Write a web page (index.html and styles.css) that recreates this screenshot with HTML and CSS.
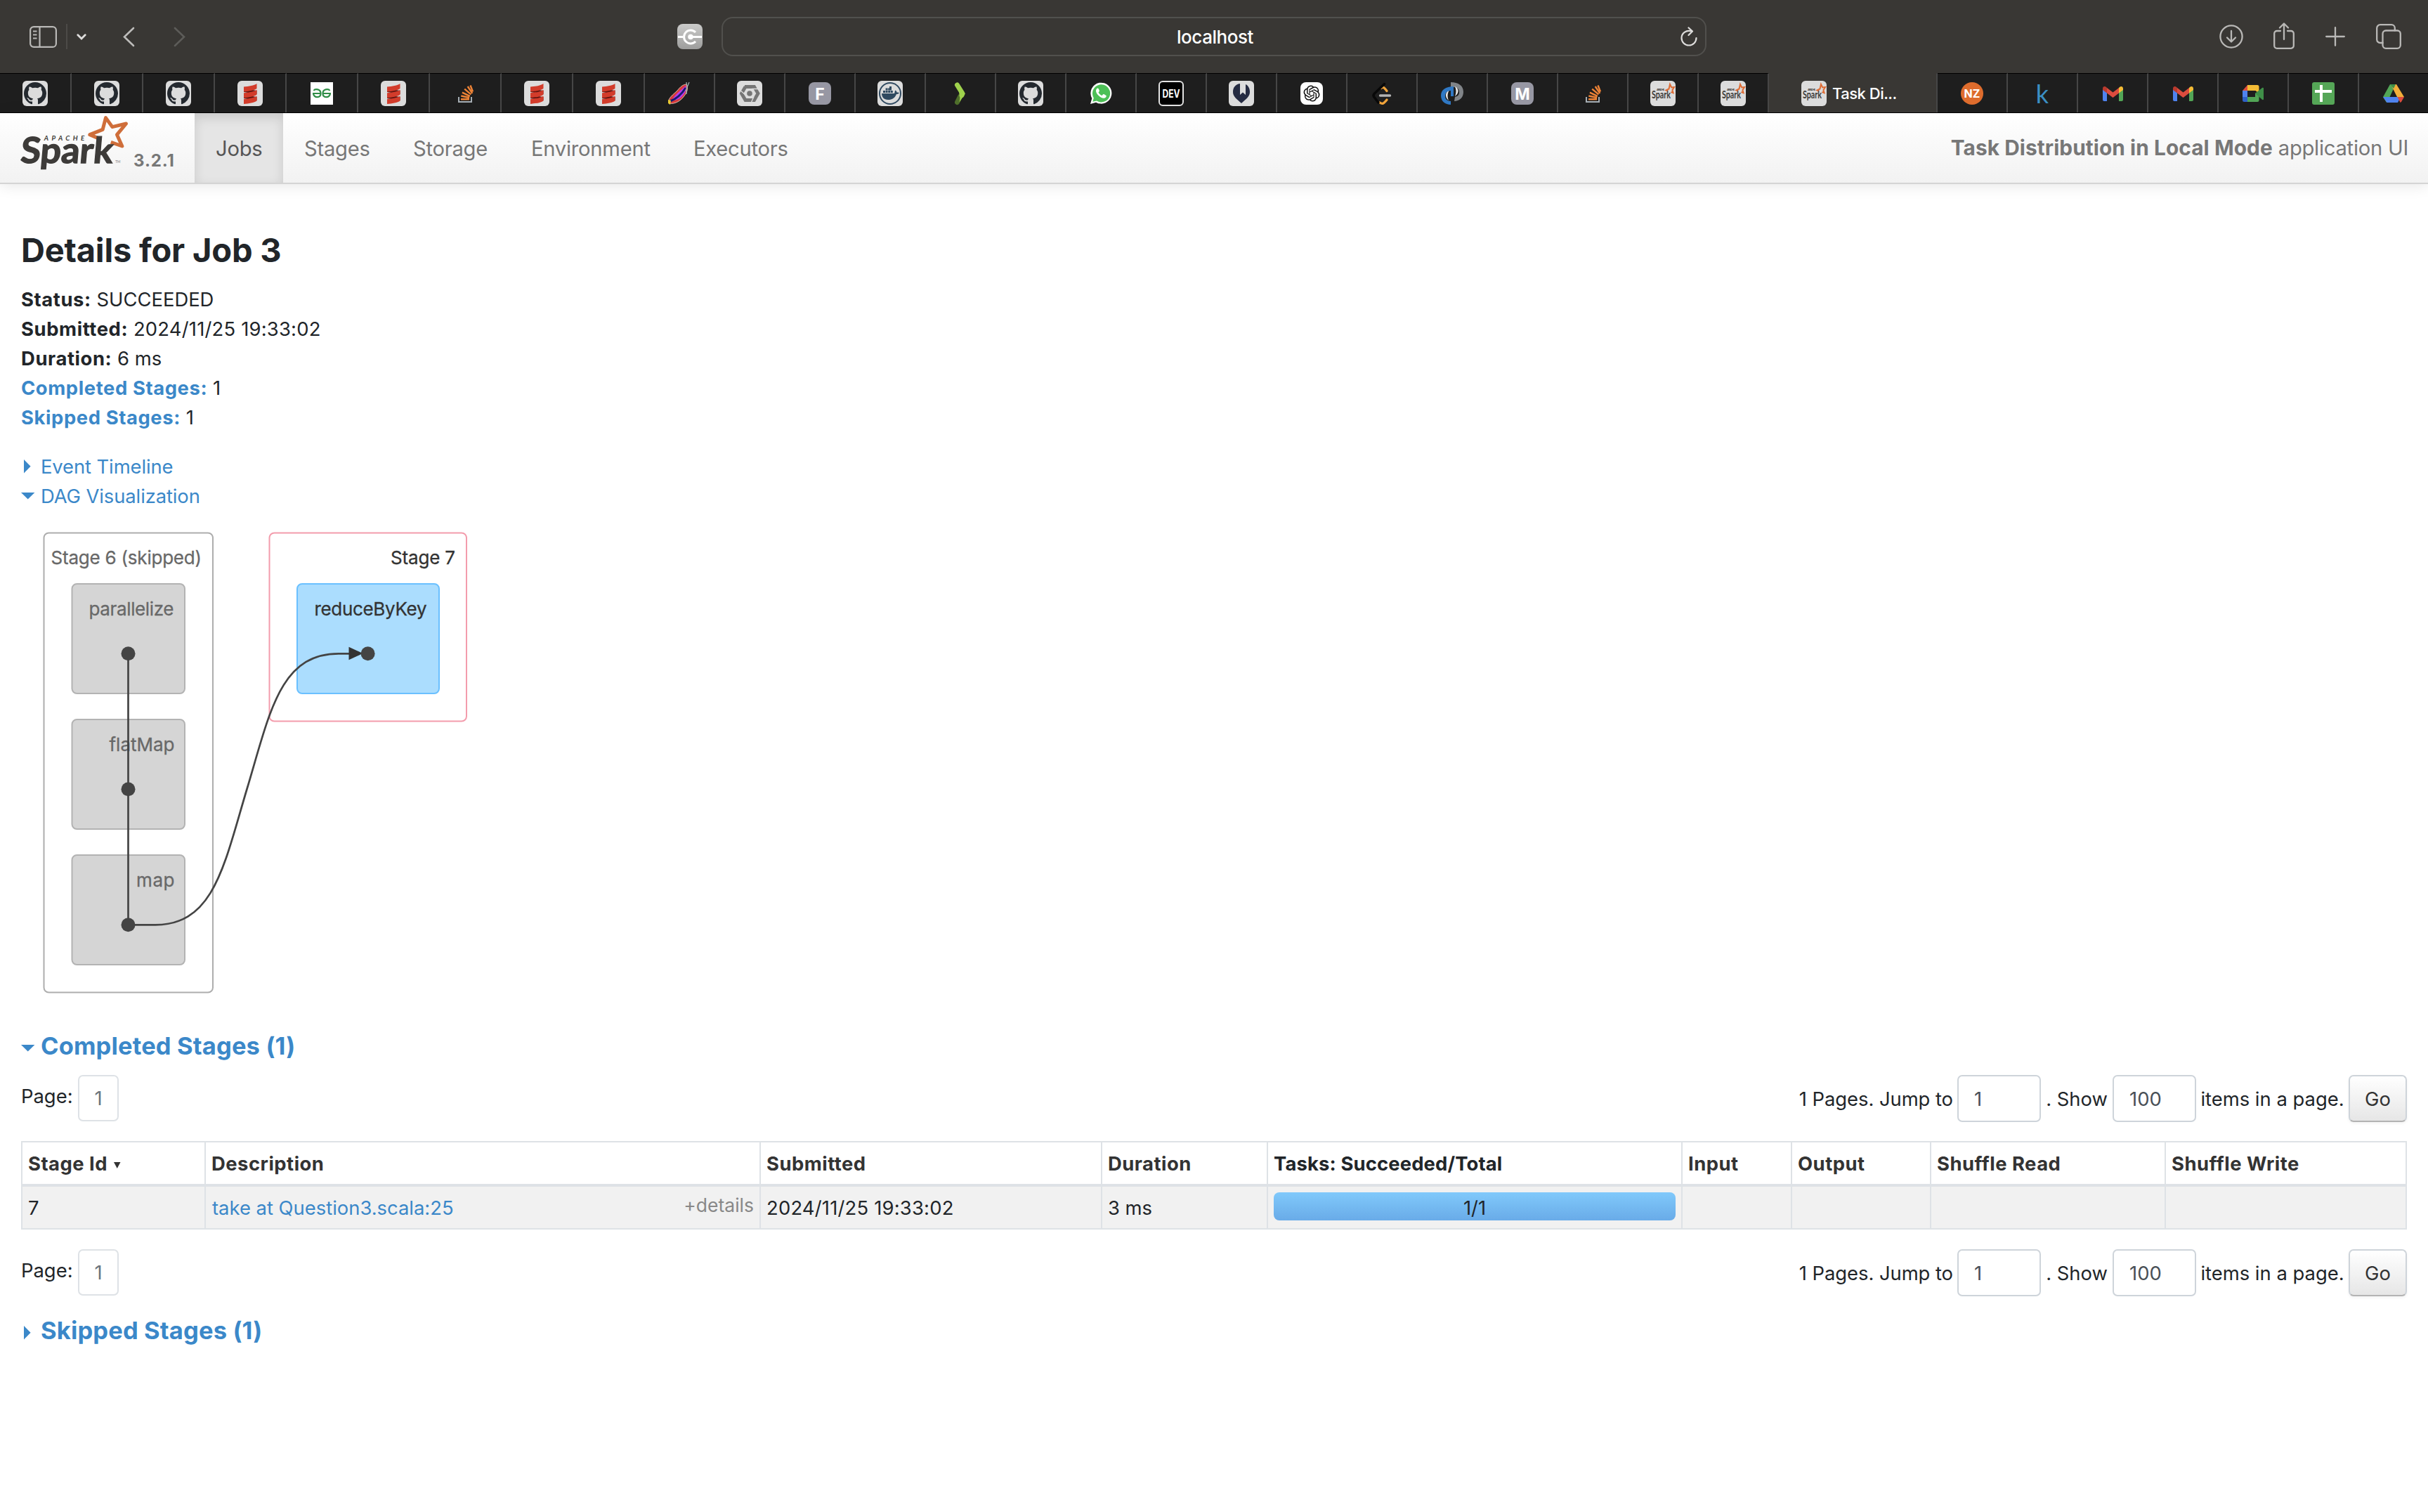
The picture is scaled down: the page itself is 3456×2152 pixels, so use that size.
FILE: index.html
```html
<!DOCTYPE html>
<html lang="en">
<head>
<meta charset="utf-8">
<title>Task Distribution in Local Mode - Details for Job 3</title>
<link rel="stylesheet" href="styles.css">
</head>
<body>
<svg class="sprite" aria-hidden="true">
  <symbol id="github" viewBox="0 0 36 36">
    <rect width="36" height="36" rx="6" fill="#dcdcdc"/>
    <path transform="translate(2 2)" fill="#24292f" fill-rule="evenodd" d="M16 0C7.16 0 0 7.16 0 16c0 7.08 4.58 13.06 10.94 15.18.8.14 1.1-.34 1.1-.76 0-.38-.02-1.64-.02-2.98-4.02.74-5.06-.98-5.38-1.88-.18-.46-.96-1.88-1.64-2.26-.56-.3-1.36-1.04-.02-1.06 1.26-.02 2.16 1.16 2.46 1.64 1.44 2.42 3.74 1.74 4.66 1.32.14-1.04.56-1.74 1.02-2.14-3.56-.4-7.28-1.78-7.28-7.9 0-1.74.62-3.18 1.64-4.3-.16-.4-.72-2.04.16-4.24 0 0 1.34-.42 4.4 1.64 1.28-.36 2.64-.54 4-.54s2.72.18 4 .54c3.06-2.08 4.4-1.64 4.4-1.64.88 2.2.32 3.84.16 4.24 1.02 1.12 1.64 2.54 1.64 4.3 0 6.14-3.74 7.5-7.3 7.9.58.5 1.08 1.46 1.08 2.96 0 2.14-.02 3.86-.02 4.4 0 .42.3.92 1.1.76A16.03 16.03 0 0 0 32 16C32 7.16 24.84 0 16 0z"/>
  </symbol>
  <symbol id="scala" viewBox="0 0 36 36">
    <rect width="36" height="36" rx="6" fill="#dcdcdc"/>
    <path fill="#5c1410" d="M9 11l18.500 3v5L9 16zM9 20l18.500 3v5L9 25z"/>
    <path fill="#d23c2b" d="M9 8.500C16 7.800 24 7 27.500 4v7C24 14 16 14.800 9 15.500zM9 17.200c7-.7 15-1.500 18.500-4.500v7C24 22.700 16 23.500 9 24.200zM9 25.900c7-.7 15-1.500 18.500-4.500v7C24 31.400 16 32.200 9 32.900z"/>
  </symbol>
  <symbol id="gfg" viewBox="0 0 36 36">
    <rect x="2" y="2" width="32" height="32" fill="#fff"/>
    <path fill="none" stroke="#2f8d46" stroke-width="2.2" d="M5 18h12.500M18.500 18H31M6.500 14c2-3 10-2.500 10 4 0 6.500-9 7-10.500.5M29.500 14c-2-3-10-2.500-10 4 0 6.500 9 7 10.500.5"/>
  </symbol>
  <symbol id="stack" viewBox="0 0 36 36">
    <path fill="none" stroke="#a5adb3" stroke-width="2" d="M9 23v7h18v-7"/>
    <path fill="none" stroke="#ee8336" stroke-width="2.4" d="M12 26.200h12M12.300 21.500l11.800 2.500M13.900 16.700l10.900 5.100M17.200 11.700l9.200 7.700M21.700 8l6.600 9.800M25.500 6.500l3.500 9"/>
  </symbol>
  <symbol id="feather" viewBox="0 0 36 36">
    <path fill="#d83a3a" stroke="#e4d9c8" stroke-width=".8" d="M3 31C1 25 10 19 15 14c4-5 8-9 13-9 3 5 1 11-2 15-5 8-14 14-23 12z"/>
    <path fill="#b63bea" d="M8 27C12 19 20 14 27 7c2 7-3 13-7 17-4 3-8 4-12 3z"/>
    <path fill="none" stroke="#151a72" stroke-width="3" d="M5 29c8-3 15-8 22-19"/>
    <path fill="#e8c932" d="M2 27l4 1-1 6-3-2z"/>
    <path stroke="#a9b6bb" stroke-width="1.2" fill="none" d="M27 14l5-12M29 10l-1-8M28 19v-6"/>
  </symbol>
  <symbol id="hexagon" viewBox="0 0 36 36">
    <rect width="36" height="36" rx="6" fill="#dcdcdc"/>
    <path fill="none" stroke="#757575" stroke-width="4.8" d="M11 8.500h13.500l5.500 9.500-5.500 9.500H12L6.500 18 12 8.500"/>
    <path stroke="#dcdcdc" stroke-width="1.4" d="M3.500 12.500L12 20M31 11.500h-10M20 31.500l4-9"/>
    <circle cx="18" cy="18" r="3.8" fill="#757575"/>
  </symbol>
  <symbol id="letter-f" viewBox="0 0 36 36">
    <rect x="2" y="2" width="32" height="32" rx="8" fill="#9797a3"/>
    <text class="glyph" x="18" y="26.700" font-size="23">F</text>
  </symbol>
  <symbol id="letter-m" viewBox="0 0 36 36">
    <rect x="2" y="2" width="32" height="32" rx="8" fill="#9797a3"/>
    <text class="glyph" x="18" y="26.700" font-size="23">M</text>
  </symbol>
  <symbol id="docker" viewBox="0 0 36 36">
    <rect width="36" height="36" rx="6" fill="#dcdcdc"/>
    <circle cx="18" cy="18" r="15" fill="none" stroke="#2f4960" stroke-width="2"/>
    <path fill="#2f4960" d="M6 18h18c1-1 0-3 1.500-4.500 1.500 1 2 2 2 3 1.500-.3 2.500 0 3.500.6-.8 1.600-2.300 2-4 2C25 25 20 27 15 27c-6 0-9-4-9-9zM8 14h3v3H8zM11.600 14h3v3h-3zM15.200 14h3v3h-3zM18.800 14h3v3h-3zM11.600 10.500h3v3h-3zM15.200 10.500h3v3h-3zM17 8h3v5.500h-3z"/>
  </symbol>
  <symbol id="chevron" viewBox="0 0 36 36">
    <path stroke="#4f6f2b" stroke-width="7" stroke-linecap="round" d="M13.500 30.500l4-8"/>
    <path fill="none" stroke="#9fd24c" stroke-width="7" stroke-linejoin="round" stroke-linecap="round" d="M13.500 6l7.500 12-1 2.500"/>
    <path fill="#9fd24c" d="M16 17l9 1-8.500 12.500c1-4 1.500-8-.5-13.500z"/>
  </symbol>
  <symbol id="whatsapp" viewBox="0 0 36 36">
    <path fill="#fff" d="M3 33l2.300-8A15 15 0 1 1 11 30.700z"/>
    <path fill="#4dc057" d="M6.300 29.800l1.500-5.400a12.600 12.600 0 1 1 4.200 4.200z"/>
    <path fill="#fff" d="M13.600 10.500c-1 0-2.600 1.500-2.600 3.800 0 4.200 6.300 10.500 11 10.500 2.300 0 3.800-1.800 3.800-3.300 0-.7-3.500-2.500-4.200-2.500-.8 0-1.500 2-2.200 2-1 0-4.800-3.200-4.800-4.500 0-.6 1.300-1.300 1.300-2.200 0-.7-1.300-3.800-2.300-3.800z"/>
  </symbol>
  <symbol id="dev" viewBox="0 0 36 36">
    <rect x="1" y="1" width="34" height="34" rx="5" fill="#000" stroke="#e2e2e2" stroke-width="2"/>
    <text class="glyph" x="18" y="23.500" font-size="16" textLength="25" lengthAdjust="spacingAndGlyphs">DEV</text>
  </symbol>
  <symbol id="pin" viewBox="0 0 36 36">
    <rect width="36" height="36" rx="6" fill="#dcdcdc"/>
    <path fill="#252b42" d="M16 4C9 5 6 10 6 16c0 7 6 10 12 16 6-6 12-9 12-16 0-5-2-9-6-11v15l-4-3.500-4 3.500z"/>
  </symbol>
  <symbol id="knot" viewBox="0 0 36 36">
    <rect x="2" y="2" width="32" height="32" rx="8" fill="#fff"/>
    <path transform="translate(6.500 6.500) scale(.96)" fill="#111" d="M22.2819 9.8211a5.9847 5.9847 0 0 0-.5157-4.9108 6.0462 6.0462 0 0 0-6.5098-2.9A6.0651 6.0651 0 0 0 4.9807 4.1818a5.9847 5.9847 0 0 0-3.9977 2.9 6.0462 6.0462 0 0 0 .7427 7.0966 5.98 5.98 0 0 0 .511 4.9107 6.051 6.051 0 0 0 6.5146 2.9001A5.9847 5.9847 0 0 0 13.2599 24a6.0557 6.0557 0 0 0 5.7718-4.2058 5.9894 5.9894 0 0 0 3.9977-2.9001 6.0557 6.0557 0 0 0-.7475-7.0729zm-9.022 12.6081a4.4755 4.4755 0 0 1-2.8764-1.0408l.1419-.0804 4.7783-2.7582a.7948.7948 0 0 0 .3927-.6813v-6.7369l2.02 1.1686a.071.071 0 0 1 .038.052v5.5826a4.504 4.504 0 0 1-4.4945 4.4944zm-9.6607-4.1254a4.4708 4.4708 0 0 1-.5346-3.0137l.142.0852 4.783 2.7582a.7712.7712 0 0 0 .7806 0l5.8428-3.3685v2.3324a.0804.0804 0 0 1-.0332.0615L9.74 19.9502a4.4992 4.4992 0 0 1-6.1408-1.6464zM2.3408 7.8956a4.485 4.485 0 0 1 2.3655-1.9728V11.6a.7664.7664 0 0 0 .3879.6765l5.8144 3.3543-2.0201 1.1685a.0757.0757 0 0 1-.071 0l-4.8303-2.7865A4.504 4.504 0 0 1 2.3408 7.872zm16.5963 3.8558L13.1038 8.364 15.1192 7.2a.0757.0757 0 0 1 .071 0l4.8303 2.7913a4.4944 4.4944 0 0 1-.6765 8.1042v-5.6772a.79.79 0 0 0-.407-.667zm2.0107-3.0231l-.142-.0852-4.7735-2.7818a.7759.7759 0 0 0-.7854 0L9.409 9.2297V6.8974a.0662.0662 0 0 1 .0284-.0615l4.8303-2.7866a4.4992 4.4992 0 0 1 6.6802 4.66zM8.3065 12.863l-2.02-1.1638a.0804.0804 0 0 1-.038-.0567V6.0742a4.4992 4.4992 0 0 1 7.3757-3.4537l-.142.0805L8.704 5.459a.7948.7948 0 0 0-.3927.6813zm1.0976-2.3654l2.602-1.4998 2.6069 1.4998v2.9994l-2.5974 1.4997-2.6067-1.4997Z"/>
  </symbol>
  <symbol id="leet" viewBox="0 0 36 36">
    <g fill="none" stroke-width="3.4" stroke-linecap="round">
      <path stroke="#f0a33a" d="M17 10.500c2-2.500 4-1.500 8 4M15 31c4 3 6 1 10-4"/>
      <path stroke="#080808" d="M21.500 4.500L7.500 18c-2 2-2 4 0 6l5.500 7"/>
      <path stroke="#b3b3b3" d="M15.500 21h14"/>
    </g>
  </symbol>
  <symbol id="links" viewBox="0 0 36 36">
    <path fill="#808488" d="M16 2c11 0 18 5 18 14 0 8-6 13-13 13l1-6c4-1 6-3 6-7 0-5-4-7-8-7h-4z"/>
    <path fill="#e9e9e9" d="M22 8c6 3 6 10 0 14 2-5 2-9 0-14zM14 13c-6 3-7 10-1 15-2-5-2-10 1-15z"/>
    <path fill="#2f78c4" d="M20 8v14h-4v-8c-6 0-8 4-8 8s3 7 8 7v5C8 34 2 29 2 21S9 8 20 8z"/>
  </symbol>
  <symbol id="spark" viewBox="0 0 36 36">
    <rect width="36" height="36" rx="6" fill="#dcdcdc"/>
    <path fill="none" stroke="#de6c35" stroke-width="2" d="M25 14.500l-2.500-1 4-2 1.500-6.500 2.200 4.500 3.800-.5-2.600 4.200 1.200 4-3.200-1.200"/>
    <text class="wordmark" x="2" y="24.500" font-size="15" textLength="27" lengthAdjust="spacingAndGlyphs">Spark</text>
    <text class="wordmark" x="9" y="14" font-size="4" textLength="11">APACHE</text>
  </symbol>
  <symbol id="nz" viewBox="0 0 36 36">
    <circle cx="18" cy="18" r="16" fill="#de6c2d"/>
    <text class="glyph" x="18" y="23.800" font-size="16">NZ</text>
  </symbol>
  <symbol id="kaggle" viewBox="0 0 36 36">
    <text class="kaggle" x="18" y="32" font-size="36">k</text>
  </symbol>
  <symbol id="gmail" viewBox="0 0 36 36">
    <path fill="#4f83ee" d="M4 12l6 4.500V29H6a2 2 0 0 1-2-2z"/>
    <path fill="#52a556" d="M33 12l-6 4.500V29h4a2 2 0 0 0 2-2z"/>
    <path fill="#f4bc35" d="M27 10l1-1c2-2 5-1 5 2v2l-6 4.500z"/>
    <path fill="#b93a2e" d="M4 11c0-3 3-4 5-2l1 1v7.500L4 13z"/>
    <path fill="#dc4c3e" d="M10 10l8.500 6.500L27 10v7.500L18.500 24 10 17.500z"/>
  </symbol>
  <symbol id="meet" viewBox="0 0 36 36">
    <path fill="#4f83ee" d="M3 14h7v9H3z"/><path fill="#dc4c3e" d="M3 14l7-8v8z"/>
    <path fill="#f4bc35" d="M10 6h14a2.500 2.500 0 0 1 2.500 2.500V18l-5-4H10z"/>
    <path fill="#2f62c9" d="M3 23h7v7H5.500A2.500 2.500 0 0 1 3 27.500z"/>
    <path fill="#52a556" d="M10 23h11v-5l5.500-4v13.500A2.500 2.500 0 0 1 24 30H10z"/>
    <path fill="#3f8f48" d="M21 18l10-8c1-.6 2 0 2 1v15c0 1-1 1.500-2 .8z"/>
  </symbol>
  <symbol id="sheets" viewBox="0 0 36 36">
    <rect x="2" y="2" width="32" height="32" rx="3" fill="#55a657"/>
    <path fill="#fff" d="M13 6h4v7h13v4H17v13h-4V17H6v-4h7z"/>
  </symbol>
  <symbol id="drive" viewBox="0 0 36 36">
    <path fill="#52a556" d="M13 5h8l-8.500 18L8 31l-5-8z"/>
    <path fill="#f2ae3a" d="M14 5h8l11 18H23z"/>
    <path fill="#3f8f48" d="M13 5h8l-3 6z"/>
    <path fill="#4f83ee" d="M9 23h19l-4 8H8.500L3 23z"/>
    <path fill="#dc4c3e" d="M23.500 23H33l-4 7-1.500 1z"/>
  </symbol>
  <symbol id="closed" viewBox="0 0 20 20"><path fill="#3b88c9" d="M4 0l9.600 9.700L4 19.400z"/></symbol>
  <symbol id="open" viewBox="0 0 20 20"><path fill="#3b88c9" d="M0 5h19.400L9.700 14.600z"/></symbol>
</svg>

<header class="toolbar">
  <div class="toolbar-left">
    <svg class="ico-sidebar" viewBox="0 0 39 31"><g fill="none" stroke="#b9b8b6" stroke-width="2.2"><rect x="1.100" y="1.100" width="36.800" height="28.800" rx="5"/><path d="M14.500 1v29M5 7.500h5.500M5 12.500h5.500M5 17.500h5.500"/></g></svg>
    <span class="rule"></span>
    <svg class="ico-down" viewBox="0 0 14 9"><path fill="none" stroke="#dedddc" stroke-width="2.8" stroke-linecap="round" d="M1.800 1.800L7 7l5.200-5.200"/></svg>
    <svg class="ico-back" viewBox="0 0 17 29"><path fill="none" stroke="#bdbcba" stroke-width="2.6" stroke-linecap="round" d="M15 2L2 14.500 15 27"/></svg>
    <svg class="ico-fwd" viewBox="0 0 17 29"><path fill="none" stroke="#5d5c59" stroke-width="2.6" stroke-linecap="round" d="M2 2l13 12.500L2 27"/></svg>
  </div>
  <svg class="ico-ext" viewBox="0 0 36 36"><defs><linearGradient id="extfill" x2="0" y2="1"><stop stop-color="#cbcbca"/><stop offset="1" stop-color="#9d9d9c"/></linearGradient></defs><rect width="36" height="36" rx="8" fill="url(#extfill)"/><g fill="none" stroke="#fff" stroke-width="3"><path d="M26 12a9.500 9.500 0 1 0 0 13M1 18.500h7M19 18.500h16"/></g><circle cx="19" cy="18.500" r="3.800" fill="#fff"/></svg>
  <div class="address">
    <span class="address-text">localhost</span>
    <svg class="ico-reload" viewBox="0 0 24 28"><g fill="none" stroke="#dedddc" stroke-width="2.2" stroke-linecap="round" stroke-linejoin="round"><path d="M16 6.500C8 4 1.500 9.500 1.500 16a10.500 10.500 0 0 0 21 0M11.500 1.500l5.500 5-5.500 5.500"/></g></svg>
  </div>
  <div class="toolbar-right">
    <svg width="34" height="34" viewBox="0 0 34 34"><g class="line"><circle cx="17" cy="17" r="15.600"/><path d="M17 9v15M11 18.500l6 6 6-6"/></g></svg>
    <svg class="ico-share" width="30" height="38" viewBox="0 0 30 38"><g class="line"><path d="M10 12H5a3.800 3.800 0 0 0-3.800 3.800V33A3.800 3.800 0 0 0 5 36.800h20a3.800 3.800 0 0 0 3.800-3.800V15.800A3.800 3.800 0 0 0 25 12h-5M15 24V2M9 7.500l6-6 6 6"/></g></svg>
    <svg class="ico-plus" width="28" height="28" viewBox="0 0 28 28"><g class="line"><path d="M14 1.200v25.600M1.200 14h25.600"/></g></svg>
    <svg class="ico-tabs" width="36" height="36" viewBox="0 0 36 36"><g class="line"><rect x="9.500" y="9.500" width="25.300" height="25.300" rx="4.500"/><path d="M9.500 27H6a4.800 4.800 0 0 1-4.800-4.800V6A4.800 4.800 0 0 1 6 1.200h16A4.800 4.800 0 0 1 26.800 6v3.500"/></g></svg>
  </div>
</header>

<nav class="tabs">
  <div class="tab wide"><svg><use href="#github"/></svg></div>
  <div class="tab wide"><svg><use href="#github"/></svg></div>
  <div class="tab wide"><svg><use href="#github"/></svg></div>
  <div class="tab wide"><svg><use href="#scala"/></svg></div>
  <div class="tab wide"><svg><use href="#gfg"/></svg></div>
  <div class="tab wide"><svg><use href="#scala"/></svg></div>
  <div class="tab wide"><svg><use href="#stack"/></svg></div>
  <div class="tab wide"><svg><use href="#scala"/></svg></div>
  <div class="tab wide"><svg><use href="#scala"/></svg></div>
  <div class="tab"><svg><use href="#feather"/></svg></div>
  <div class="tab"><svg><use href="#hexagon"/></svg></div>
  <div class="tab"><svg><use href="#letter-f"/></svg></div>
  <div class="tab"><svg><use href="#docker"/></svg></div>
  <div class="tab"><svg><use href="#chevron"/></svg></div>
  <div class="tab"><svg><use href="#github"/></svg></div>
  <div class="tab"><svg><use href="#whatsapp"/></svg></div>
  <div class="tab"><svg><use href="#dev"/></svg></div>
  <div class="tab"><svg><use href="#pin"/></svg></div>
  <div class="tab"><svg><use href="#knot"/></svg></div>
  <div class="tab"><svg><use href="#leet"/></svg></div>
  <div class="tab"><svg><use href="#links"/></svg></div>
  <div class="tab"><svg><use href="#letter-m"/></svg></div>
  <div class="tab"><svg><use href="#stack"/></svg></div>
  <div class="tab"><svg><use href="#spark"/></svg></div>
  <div class="tab"><svg><use href="#spark"/></svg></div>
  <div class="tab active"><svg><use href="#spark"/></svg><span>Task Di...</span></div>
  <div class="tab"><svg><use href="#nz"/></svg></div>
  <div class="tab"><svg><use href="#kaggle"/></svg></div>
  <div class="tab"><svg><use href="#gmail"/></svg></div>
  <div class="tab"><svg><use href="#gmail"/></svg></div>
  <div class="tab"><svg><use href="#meet"/></svg></div>
  <div class="tab"><svg><use href="#sheets"/></svg></div>
  <div class="tab"><svg><use href="#drive"/></svg></div>
</nav>

<nav class="navbar">
  <div class="brand">
    <svg class="logo" viewBox="24 174 470 246">
      <path fill="none" stroke="#cf6e3a" stroke-width="15" stroke-linejoin="round" d="M372 284l-49-21 55-22 13-50 28 39 59-14-39 47 22 49-48-17"/>
      <text class="wordmark heavy" transform="skewX(-5)" x="58" y="384" font-size="153" textLength="394" lengthAdjust="spacingAndGlyphs">Spark</text>
      <text class="wordmark apache" x="128" y="287" font-size="29" textLength="172">APACHE</text>
      <text class="wordmark tm" x="432" y="385" font-size="14">TM</text>
    </svg>
    <span class="version">3.2.1</span>
  </div>
  <a class="nav-item current">Jobs</a>
  <a class="nav-item stages">Stages</a>
  <a class="nav-item storage">Storage</a>
  <a class="nav-item env">Environment</a>
  <a class="nav-item exec">Executors</a>
  <p class="app-name"><b>Task Distribution in Local Mode</b> application UI</p>
</nav>

<main class="content">
  <h3>Details for Job 3</h3>
  <ul class="summary">
    <li><b>Status:</b> SUCCEEDED</li>
    <li><b>Submitted:</b> <span class="date">2024/11/25 19:33:02</span></li>
    <li><b>Duration:</b> 6 ms</li>
    <li><a><b>Completed Stages:</b></a> 1</li>
    <li><a><b>Skipped Stages:</b></a> 1</li>
  </ul>
  <div class="toggles">
    <a class="toggle"><svg><use href="#closed"/></svg>Event Timeline</a>
    <a class="toggle"><svg><use href="#open"/></svg>DAG Visualization</a>
  </div>

  <svg class="dag" viewBox="30 750 650 670">
    <g class="skipped">
      <rect class="stage" x="62.500" y="758.500" width="240.500" height="654" rx="7"/>
      <rect class="op" x="102.500" y="831" width="160.500" height="156" rx="7"/>
      <rect class="op" x="102.500" y="1024" width="160.500" height="156" rx="7"/>
      <rect class="op" x="102.500" y="1217" width="160.500" height="156" rx="7"/>
      <text x="72.500" y="803" textLength="214.500">Stage 6 (skipped)</text>
      <text x="126.500" y="876" textLength="121">parallelize</text>
      <text x="155.500" y="1069" textLength="93">flatMap</text>
      <text x="194" y="1262" textLength="54.500">map</text>
    </g>
    <g class="ran">
      <rect class="stage" x="383.500" y="758.500" width="280.500" height="268" rx="7"/>
      <rect class="op" x="423" y="831" width="202" height="156" rx="7"/>
      <text x="556" y="803" textLength="92">Stage 7</text>
      <text x="447.500" y="876" textLength="160">reduceByKey</text>
    </g>
    <path class="edge" d="M182.500 930V1316M182.500 1316.300H221C305 1316.300 319 1231 351.500 1123S398 930.300 482 930.300H500"/>
    <path fill="#333" d="M496.500 920.800v18.400l20-9.200z"/>
    <g fill="#444"><circle cx="182.500" cy="930.300" r="10"/><circle cx="182.500" cy="1123.300" r="10"/><circle cx="182.500" cy="1316.300" r="10"/><circle cx="523.600" cy="930.300" r="10"/></g>
  </svg>

  <h4 class="toggle completed"><svg><use href="#open"/></svg>Completed Stages (1)</h4>

  <div class="pager">
    <span class="page-label">Page:</span><span class="page-no">1</span>
    <form class="jump">
      <span class="pages">1 Pages. Jump to</span><span class="field">1</span><span class="show">. Show</span><span class="field">100</span><span class="items">items in a page.</span><span class="go">Go</span>
    </form>
  </div>

  <table class="stages-table">
    <colgroup><col class="c1"><col class="c2"><col class="c3"><col class="c4"><col class="c5"><col class="c6"><col class="c7"><col class="c8"><col class="c9"></colgroup>
    <thead><tr><th>Stage Id<svg class="sort" viewBox="0 0 10 9"><path fill="#333" d="M0 0h9.500L4.750 9z"/></svg></th><th>Description</th><th>Submitted</th><th>Duration</th><th class="tasks">Tasks: Succeeded/Total</th><th>Input</th><th>Output</th><th>Shuffle Read</th><th>Shuffle Write</th></tr></thead>
    <tbody><tr><td>7</td><td><div class="desc"><a>take at Question3.scala:25</a><span class="details">+details</span></div></td><td class="date">2024/11/25 19:33:02</td><td>3 ms</td><td><div class="progress">1/1</div></td><td></td><td></td><td></td><td></td></tr></tbody>
  </table>

  <div class="pager">
    <span class="page-label">Page:</span><span class="page-no">1</span>
    <form class="jump">
      <span class="pages">1 Pages. Jump to</span><span class="field">1</span><span class="show">. Show</span><span class="field">100</span><span class="items">items in a page.</span><span class="go">Go</span>
    </form>
  </div>

  <h4 class="toggle skipped-title"><svg><use href="#closed"/></svg>Skipped Stages (1)</h4>
</main>
</body>
</html>
```
FILE: styles.css
```css
* { box-sizing: border-box; }

body {
  margin: 0;
  background: #fff;
  color: #212529;
  font: 27.4px/42px Inter, "Liberation Sans", sans-serif;
  overflow: hidden;
}

h3, h4, p, ul { margin: 0; padding: 0; }
svg { display: block; flex: none; }
b, h3, h4, th { font-weight: 700; }
.sprite { display: none; }

/* Browser toolbar */
.toolbar {
  display: grid;
  grid-template-columns: 964px 63px 1402px 1fr;
  align-items: center;
  height: 104px;
  background: #393734;
}
.toolbar-left { display: flex; align-items: center; height: 100px; padding-left: 42px; }
.ico-sidebar { width: 39px; height: 31px; }
.rule { width: 2px; height: 36px; margin-left: 13px; background: #4c4a47; }
.ico-down { width: 14px; height: 9px; margin-left: 13px; }
.ico-back { width: 17px; height: 29px; margin-left: 52px; }
.ico-fwd { width: 17px; height: 29px; margin-left: 55px; }
.ico-ext { width: 36px; height: 36px; }
.address {
  display: flex;
  align-items: center;
  height: 56px;
  padding-right: 11px;
  border: 2px solid #51504d;
  border-radius: 16px;
  color: #fff;
}
.address-text {
  flex: 1;
  padding: 1px 0 0 38px;
  text-align: center;
  font-size: 26px;
  font-weight: 500;
  letter-spacing: -.45px;
}
.ico-reload { width: 24px; height: 28px; }
.toolbar-right { display: flex; align-items: center; height: 102px; padding-left: 730px; }
.line { fill: none; stroke: #b9b8b6; stroke-width: 2.3; stroke-linecap: round; stroke-linejoin: round; }
.ico-share { margin: -3px 0 0 43px; }
.ico-plus { margin-left: 44px; }
.ico-tabs { margin-left: 44px; }

/* Tab strip */
.tabs { display: flex; height: 57px; background: #1e1e1e; border-bottom: 1px solid #000; }
.tab {
  display: flex;
  flex: none;
  align-items: center;
  justify-content: center;
  width: 100px;
  padding-top: 1px;
  border-top: 1px solid #000;
  border-right: 2px solid #464646;
}
.tab svg { width: 36px; height: 36px; }
.tab.wide { width: 102px; }
.tab.active {
  justify-content: flex-start;
  gap: 8px;
  width: 240px;
  padding-left: 46px;
  background: #393734;
  border-top-color: #393734;
  color: #fff;
  font-size: 22px;
  font-weight: 500;
  letter-spacing: -.5px;
}
.tab:last-child { width: 98px; border-right: 0; }
.glyph { fill: #fff; font-family: Inter, sans-serif; font-weight: 700; text-anchor: middle; letter-spacing: 0; }
.kaggle { fill: #3b8fc4; font-family: Lato, sans-serif; text-anchor: middle; }
.wordmark { fill: #3d3b39; font-family: Lato, sans-serif; font-weight: 700; letter-spacing: 0; }
.heavy { stroke: #3d3b39; stroke-width: 4; }
.apache { font-style: italic; }
.tm { fill: #999; }

/* Spark navigation */
.navbar {
  display: flex;
  height: 101px;
  line-height: 100px;
  background: linear-gradient(#fff, #f2f2f2);
  border-bottom: 2px solid #d4d4d4;
  box-shadow: 0 2px 20px rgba(0, 0, 0, .1);
  color: #777;
  font-size: 29.2px;
  letter-spacing: -.25px;
}
.brand { display: flex; width: 277px; padding: 1px 0 0 28px; }
.logo { width: 157px; height: 82px; }
.version { margin-left: 5px; padding-top: 18px; line-height: 98px; font-size: 24px; font-weight: 700; letter-spacing: .9px; }
.nav-item { width: 155px; padding: 1px 0 0 30px; }
.nav-item.current {
  width: 126px;
  background: #e5e5e5;
  box-shadow: inset 0 6px 16px rgba(0, 0, 0, .125);
  color: #555;
}
.nav-item.storage { width: 168px; }
.nav-item.env { width: 231px; }
.nav-item.exec { width: 200px; }
.app-name { margin-left: auto; padding-right: 28px; line-height: 99px; }
.app-name b { font-size: 29.8px; letter-spacing: .08px; }

/* Job details */
.content { padding: 65px 30px 0; }
h3 { margin-bottom: 20px; font-size: 47px; line-height: 58px; letter-spacing: -.2px; }
.summary { list-style: none; margin-bottom: 28px; }
.summary b { letter-spacing: .6px; }
.date { letter-spacing: .2px; }
a { color: #3b88c9; }
.navbar a { color: inherit; }
.toggle { display: flex; align-items: center; gap: 8px; color: #3b88c9; }
.toggles .toggle { letter-spacing: -.1px; }
.toggle svg { width: 20px; height: 20px; }
.dag { width: 650px; height: 670px; margin: 23px 0 48px; }
.dag text { font-size: 26px; stroke-width: .3px; }
.skipped text { fill: #686868; stroke: #686868; }
.skipped .stage { fill: #fff; stroke: #adadad; stroke-width: 2; }
.skipped .op { fill: #d5d5d5; stroke: #b3b3b3; stroke-width: 2; }
.ran text { fill: #333; stroke: #333; }
.ran .stage { fill: #fff; stroke: #f39cac; stroke-width: 2; }
.ran .op { fill: #abddfe; stroke: #6ac0ff; stroke-width: 2; }
.edge { fill: none; stroke: #444; stroke-width: 2.7; }
h4 { font-size: 34.5px; line-height: 42px; letter-spacing: .15px; }
.completed { margin-bottom: 20px; }
.completed svg { margin-top: 6px; }
.skipped-title { margin-top: 28px; }
.skipped-title svg { margin-top: 6px; }

.pager { display: flex; height: 67px; }
.page-label { width: 81px; line-height: 60px; }
.page-no {
  width: 58px;
  height: 66px;
  border: 2px solid #dee2e6;
  border-radius: 7px;
  color: #6c757d;
  line-height: 63px;
  text-align: center;
}
.jump { display: flex; margin-left: auto; line-height: 69px; }
.pages { margin-right: 6px; letter-spacing: -.05px; }
.field {
  width: 119px;
  padding-left: 22px;
  border: 2px solid #ced4da;
  border-radius: 7px;
  color: #495057;
  line-height: 65px;
}
.show { width: 102px; text-align: center; }
.items { width: 217px; text-align: center; }
.go {
  width: 83px;
  border: 2px solid #ced4da;
  border-bottom-color: #b3b3b3;
  border-radius: 7px;
  background: linear-gradient(#fff, #e6e6e6);
  box-shadow: 0 2px 4px rgba(0, 0, 0, .05);
  color: #333;
  line-height: 65px;
  text-align: center;
}

.stages-table {
  table-layout: fixed;
  width: 3396px;
  margin: 27px 0 28px;
  border: 2px solid #dee2e6;
  border-right: 0;
  border-spacing: 0;
}
.c1 { width: 261px; } .c2 { width: 790px; } .c3 { width: 486px; }
.c4 { width: 236px; } .c5 { width: 590px; } .c6 { width: 156px; }
.c7 { width: 198px; } .c8 { width: 334px; } .c9 { width: 343px; }
.stages-table th, .stages-table td {
  padding: 0 8px;
  border-right: 2px solid #dee2e6;
  text-align: left;
}
.stages-table th {
  height: 63px;
  border-bottom: 4px solid #dee2e6;
  color: #333;
  letter-spacing: .5px;
}
.stages-table th.tasks { color: #212529; letter-spacing: .15px; }
.stages-table td { height: 59px; background: #f1f1f1; }
.sort { display: inline-block; width: 10px; height: 9px; margin: 0 0 3px 9px; }
.desc { display: flex; align-items: center; justify-content: space-between; padding-left: 1px; }
.details { margin-bottom: 8px; color: #888; font-size: 26.5px; }
.progress {
  height: 40px;
  margin-top: -3px;
  border-radius: 8px;
  background: linear-gradient(#80c9fb, #69abe8);
  line-height: 44px;
  text-align: center;
}
```
